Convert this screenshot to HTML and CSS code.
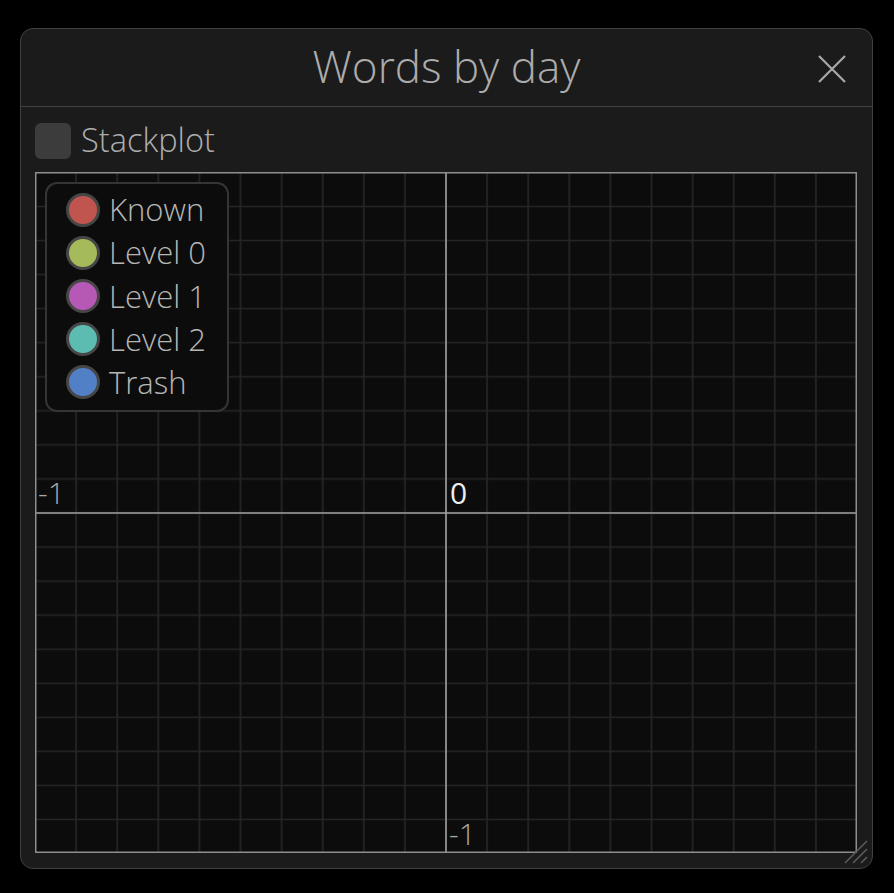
FILE: index.html
```html
<!DOCTYPE html>
<html>
<head>
<meta charset="utf-8">
<link rel="stylesheet" href="styles.css">
</head>
<body>
<div class="window">
  <div class="titlebar">
    <span></span>
    <div class="title">Words by day</div>
    <svg class="close" width="28" height="28" viewBox="0 0 28 28"><path d="M1 1 L27 27 M27 1 L1 27" stroke="#a8a8a8" stroke-width="2.2" fill="none"/></svg>
  </div>
  <div class="content">
    <label class="check-row">
      <span class="checkbox"></span>
      <span class="check-label">Stackplot</span>
    </label>
    <div class="plot">
      <svg class="grid" width="822" height="681" viewBox="0 0 822 681">
        <defs>
          <pattern id="gp" width="41.1" height="34.05" patternUnits="userSpaceOnUse" x="390.45" y="323.975">
            <path d="M20.55 0 V34.05 M0 17.025 H41.1" stroke="#262626" stroke-width="1.6" fill="none"/>
          </pattern>
        </defs>
        <rect x="0" y="0" width="822" height="681" fill="#0c0c0c"/>
        <rect x="0" y="0" width="822" height="681" fill="url(#gp)"/>
        <path d="M411 0 V681 M0 341 H822" stroke="#a0a0a0" stroke-width="1.6" fill="none"/>
        <rect x="0.75" y="0.75" width="820.5" height="679.5" stroke="#8e8e8e" stroke-width="1.5" fill="none"/>
      </svg>
      <div class="legend">
        <div class="legend-row"><span class="dot known"></span><span>Known</span></div>
        <div class="legend-row"><span class="dot l0"></span><span>Level 0</span></div>
        <div class="legend-row"><span class="dot l1"></span><span>Level 1</span></div>
        <div class="legend-row"><span class="dot l2"></span><span>Level 2</span></div>
        <div class="legend-row"><span class="dot trash"></span><span>Trash</span></div>
      </div>
      <span class="axis-label lbl-left">-1</span>
      <span class="axis-label lbl-zero">0</span>
      <span class="axis-label lbl-bottom">-1</span>
    </div>
  </div>
  <svg class="resize" width="26" height="26" viewBox="0 0 26 26">
    <path d="M2 24 L24 2 M10 24 L24 10 M18 24 L24 18" stroke="#5a5a5a" stroke-width="1.6" fill="none"/>
  </svg>
</div>
</body>
</html>
```

FILE: styles.css
```css
html, body {
  margin: 0;
  padding: 0;
  background: #000;
}
body {
  font-family: "Open Sans", "Noto Sans", sans-serif;
  font-weight: 300;
  color: #aaaaaa;
  padding: 28px 0 0 20px;
}
.window {
  position: relative;
  width: 851px;
  height: 839px;
  border: 1px solid #414141;
  border-radius: 13px;
  background: #1b1b1b;
  display: flex;
  flex-direction: column;
  box-sizing: content-box;
}
.titlebar {
  height: 77px;
  border-bottom: 1px solid #414141;
  display: grid;
  grid-template-columns: 1fr auto 1fr;
  align-items: center;
}
.title {
  font-size: 44px;
  line-height: 1;
  color: #acacac;
  padding-bottom: 4px;
}
.close {
  justify-self: end;
  margin-right: 26px;
  margin-top: 2px;
}
.content {
  padding: 16px 15px 15px 14px;
  display: flex;
  flex-direction: column;
}
.check-row {
  display: flex;
  align-items: center;
  height: 36px;
  margin-bottom: 13px;
}
.checkbox {
  width: 36px;
  height: 36px;
  border-radius: 6px;
  background: #3c3c3c;
}
.check-label {
  margin-left: 10px;
  font-size: 32.6px;
  line-height: 1;
  color: #aeaeae;
  padding-bottom: 2px;
}
.plot {
  position: relative;
  width: 822px;
  height: 681px;
}
.grid {
  display: block;
}
.legend {
  position: absolute;
  left: 10px;
  top: 10px;
  width: 184px;
  height: 230px;
  box-sizing: border-box;
  border: 2px solid #353535;
  border-radius: 12px;
  background: #0c0c0c;
  padding: 4px 0 6px 19px;
  display: flex;
  flex-direction: column;
}
.legend-row {
  height: 43.6px;
  display: flex;
  align-items: center;
  font-size: 31px;
  line-height: 1;
  color: #b6b6b6;
}
.dot {
  width: 28px;
  height: 28px;
  border-radius: 50%;
  border: 3px solid #464646;
  margin-right: 9px;
  flex: none;
}
.known { background: #c0554f; }
.l0 { background: #a5ba5a; }
.l1 { background: #b658b6; }
.l2 { background: #5cbcb2; }
.trash { background: #5180c6; }
.axis-label {
  position: absolute;
  font-size: 30px;
  line-height: 1;
  color: #a8a8a8;
}
.lbl-left { left: 3px; top: 306px; }
.lbl-zero { left: 415px; top: 306px; color: #ececec; font-weight: 400; }
.lbl-bottom { left: 414px; top: 647px; }
.resize {
  position: absolute;
  right: 3px;
  bottom: 3px;
}
```
